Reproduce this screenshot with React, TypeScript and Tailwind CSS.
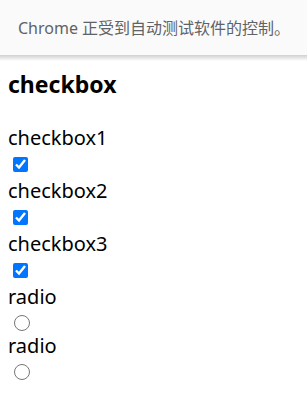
const font = { fontFamily: '"Noto Sans", "Noto Sans CJK SC", sans-serif' }

function TextLine({ children }: { children: string }) {
  return <div className="h-[26px] text-[20px] leading-[26px] text-black">{children}</div>
}

function CheckRow() {
  return (
    <div className="h-[27px] pt-[6px] pl-[5px]">
      <input type="checkbox" defaultChecked className="m-0 block h-[15px] w-[15px] accent-[#0075ff]" />
    </div>
  )
}

function RadioRow() {
  return (
    <div className="h-[23px] pt-[5px] pl-[6px]">
      <input type="radio" name="r" className="m-0 block h-[16px] w-[16px]" />
    </div>
  )
}

export default function App() {
  return (
    <div className="min-h-[396px] w-[307px] bg-white" style={font}>
      <div className="flex h-[55px] items-center bg-[#fafafa] pl-[18px] text-[16px] text-[#5f6368]">
        Chrome 正受到自动测试软件的控制。
      </div>
      <div className="h-[6px] bg-gradient-to-b from-[#d0d0d0] to-white" />
      <div className="pl-[8px] pt-[8px]">
        <h3 className="h-[30px] text-[23px] font-bold leading-[30px] text-black">checkbox</h3>
        <div className="mt-[26px]">
          <TextLine>checkbox1</TextLine>
          <CheckRow />
          <TextLine>checkbox2</TextLine>
          <CheckRow />
          <TextLine>checkbox3</TextLine>
          <CheckRow />
          <TextLine>radio</TextLine>
          <RadioRow />
          <TextLine>radio</TextLine>
          <RadioRow />
        </div>
      </div>
    </div>
  )
}
